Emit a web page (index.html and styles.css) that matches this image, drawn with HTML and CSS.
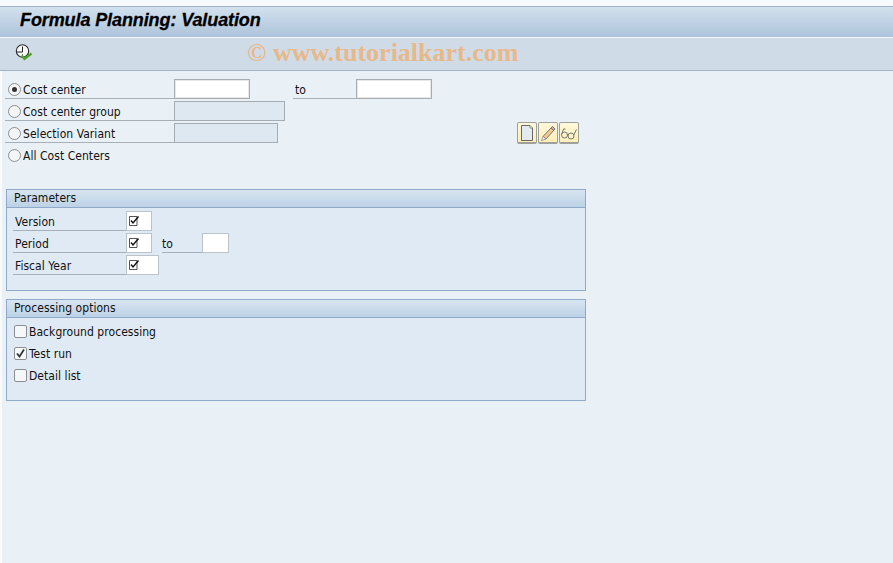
FILE: index.html
```html
<!DOCTYPE html>
<html lang="en">
<head>
<meta charset="utf-8">
<title>Formula Planning: Valuation</title>
<link rel="stylesheet" href="styles.css">
</head>
<body>
<div class="strip"></div>
<header class="titlebar"><h1>Formula Planning: Valuation</h1></header>
<div class="toolbar">
  <svg class="exec" width="18" height="18" viewBox="0 0 18 18"><circle cx="7.500" cy="7" r="6.200" fill="#f6f8f8" stroke="#2b2b2b" stroke-width="1.100"/><path d="M7.500 2.500V8M2 8H7.500M7.500 10.500V12" fill="none" stroke="#222" stroke-width="1"/><path d="M6.500 11.500l3 3.300L16.500 9.500" fill="none" stroke="#4fa32c" stroke-width="2.400"/></svg>
  <div class="watermark">© www.tutorialkart.com</div>
</div>
<main class="content">
  <div class="selection">
    <div class="row">
      <label class="lbl lbl-radio"><span class="radio on"></span>Cost center</label>
      <span class="field w76"></span>
      <label class="lbl lbl-to">to</label>
      <span class="field w76"></span>
    </div>
    <div class="row">
      <label class="lbl lbl-radio"><span class="radio"></span>Cost center group</label>
      <span class="field off w111"></span>
    </div>
    <div class="row">
      <label class="lbl lbl-radio"><span class="radio"></span>Selection Variant</label>
      <span class="field off w104"></span>
      <div class="btns">
        <button class="btn" type="button"><svg width="16" height="18" viewBox="0 0 16 18"><path d="M2.500 1.500H11L13.500 4V16.500H2.500Z" fill="#e3ebf0" stroke="#666"/><path d="M11 1.500V4H13.500" fill="#fff" stroke="#888"/></svg></button>
        <button class="btn" type="button"><svg width="16" height="18" viewBox="0 0 16 18"><path d="M3 12.500L11.500 3.500 14 6 6 15Z" fill="#f3c98e" stroke="#777"/><path d="M11 4L13.500 6.500 15 5 12.500 2.500Z" fill="#e79a9a" stroke="#777"/><path d="M1.500 16.500L3 12.500 6 15Z" fill="#fff" stroke="#777" stroke-width=".7"/></svg></button>
        <button class="btn" type="button"><svg width="18" height="16" viewBox="0 0 18 16"><circle cx="4.500" cy="10" r="3" fill="none" stroke="#777"/><circle cx="11" cy="11" r="3" fill="none" stroke="#777"/><path d="M7.300 9.500L8.300 10M1.800 9L3.500 4H5.500M13.800 10L16.500 4.500" fill="none" stroke="#777"/></svg></button>
      </div>
    </div>
    <div class="row">
      <label class="lbl lbl-radio lbl-plain"><span class="radio"></span>All Cost Centers</label>
    </div>
  </div>

  <section class="panel panel-params">
    <h2 class="panel-head">Parameters</h2>
    <div class="panel-body">
      <div class="row">
        <label class="lbl lbl-param">Version</label>
        <span class="field req w26"><svg width="12" height="12" viewBox="0 0 12 12"><path d="M1.500 1.500H9V10.500H1.500Z" fill="none" stroke="#555"/><path d="M3 5.500L5 8 10.500 1.500" fill="none" stroke="#111" stroke-width="1.400"/></svg></span>
      </div>
      <div class="row">
        <label class="lbl lbl-param">Period</label>
        <span class="field req w26"><svg width="12" height="12" viewBox="0 0 12 12"><path d="M1.500 1.500H9V10.500H1.500Z" fill="none" stroke="#555"/><path d="M3 5.500L5 8 10.500 1.500" fill="none" stroke="#111" stroke-width="1.400"/></svg></span>
        <label class="lbl lbl-to2">to</label>
        <span class="field req w27"></span>
      </div>
      <div class="row">
        <label class="lbl lbl-param">Fiscal Year</label>
        <span class="field req w33"><svg width="12" height="12" viewBox="0 0 12 12"><path d="M1.500 1.500H9V10.500H1.500Z" fill="none" stroke="#555"/><path d="M3 5.500L5 8 10.500 1.500" fill="none" stroke="#111" stroke-width="1.400"/></svg></span>
      </div>
    </div>
  </section>

  <section class="panel panel-opts">
    <h2 class="panel-head">Processing options</h2>
    <div class="panel-body">
      <div class="row"><label class="chk"><span class="box"></span><span class="chk-text">Background processing</span></label></div>
      <div class="row"><label class="chk"><span class="box"><svg width="11" height="11" viewBox="0 0 11 11"><path d="M2 5.500L4.500 8.500 9 1.500" fill="none" stroke="#333" stroke-width="1.800"/></svg></span><span class="chk-text">Test run</span></label></div>
      <div class="row"><label class="chk"><span class="box"></span><span class="chk-text">Detail list</span></label></div>
    </div>
  </section>
</main>
</body>
</html>
```

FILE: styles.css
```css
* { box-sizing: border-box; }
html, body { margin: 0; padding: 0; height: 100%; }
body {
  display: flex;
  flex-direction: column;
  overflow: hidden;
  background: #f8fafc;
  font: 12px/14px "DejaVu Sans Condensed", "DejaVu Sans", sans-serif;
  font-stretch: condensed;
  letter-spacing: 0.05px;
  color: #111;
}
.strip { height: 6px; flex: none; background: #f8f9fc; }
.titlebar {
  height: 32px;
  flex: none;
  padding: 2px 0 0 20px;
  border-top: 1px solid #a3b2c6;
  border-bottom: 1px solid #f1f5f8;
  background: linear-gradient(#d3e1ee, #adc3da);
}
.titlebar h1 {
  margin: 0;
  font: italic bold 18px/22px "Liberation Sans", sans-serif;
  letter-spacing: -0.1px;
  -webkit-text-stroke: 0.3px #000;
  color: #000;
}
.toolbar {
  position: relative;
  height: 33px;
  flex: none;
  padding: 6px 0 0 15px;
  border-bottom: 1px solid #a3b4c8;
  background: #cfdce7;
}
.exec { display: block; }
.watermark {
  position: absolute;
  left: 247px;
  top: 0;
  font: bold 26px/30px "Liberation Serif", serif;
  letter-spacing: 0;
  color: #e7b88a;
  white-space: nowrap;
}
.content {
  flex: 1;
  margin-left: 2px;
  padding: 8px 0 0 3px;
  background: #e9f0f6;
}
.row { display: flex; align-items: flex-start; height: 22px; }
.lbl {
  display: flex;
  align-items: center;
  height: 20px;
  padding-top: 3px;
  white-space: nowrap;
  border-bottom: 1px solid #a6b0b9;
}
.lbl-radio { width: 169px; padding-left: 3px; }
.lbl-plain { padding-top: 1px; border-bottom: 0; }
.lbl-to { width: 63px; margin-left: 43px; padding-left: 2px; }
.radio {
  width: 13px;
  height: 13px;
  margin-right: 2px;
  margin-top: -1px;
  flex: none;
  border: 1px solid #8b8f93;
  border-radius: 50%;
  background: #f3f5f7;
  display: flex;
  align-items: center;
  justify-content: center;
}
.radio.on::after {
  content: "";
  width: 5px;
  height: 5px;
  border-radius: 50%;
  background: #333;
}
.field {
  display: flex;
  align-items: center;
  height: 20px;
  flex: none;
  padding-left: 1px;
  border: 1px solid #a9adb1;
  box-shadow: inset 0 0 0 1px #e6e8ea;
  background: #fff;
}
.field.off { background: #dde8f1; border-color: #a5adb4; box-shadow: none; }
.field.req { border-color: #bcc3c9; box-shadow: none; }
.w76 { width: 76px; }
.w111 { width: 111px; }
.w104 { width: 104px; }
.w26 { width: 26px; }
.w27 { width: 27px; }
.w33 { width: 33px; }
.btns { display: flex; gap: 1px; margin-left: 239px; margin-top: -1px; }
.btn {
  width: 20px;
  height: 22px;
  padding: 0;
  display: flex;
  align-items: center;
  justify-content: center;
  border: 1px solid #a0a09a;
  border-bottom-width: 2px;
  border-radius: 2px;
  background: linear-gradient(#fff9dc, #fdeeb5);
}
.panel {
  width: 580px;
  margin-left: 1px;
  border: 1px solid #8fa9c8;
  background: #dfeaf4;
}
.panel-params { height: 102px; margin-top: 22px; }
.panel-opts { height: 102px; margin-top: 8px; }
.panel-head {
  height: 18px;
  margin: 0;
  padding: 1px 0 0 7px;
  font: inherit;
  font-stretch: condensed;
  color: #111;
  border-bottom: 1px solid #8fa9c8;
  background: linear-gradient(#d8e5f1, #bcd2e6);
}
.panel-body { padding-top: 3px; }
.lbl-param { width: 113px; margin-left: 6px; padding-left: 2px; }
.lbl-to2 { width: 40px; margin-left: 10px; padding-left: 0; }
.chk { display: flex; align-items: center; height: 20px; margin-left: 7px; white-space: nowrap; }
.chk-text { padding-top: 1px; }
.box {
  width: 13px;
  height: 13px;
  margin-right: 2px;
  flex: none;
  display: flex;
  align-items: center;
  justify-content: center;
  border: 1px solid #8b8f93;
  border-radius: 2px;
  background: #f5f7f9;
}
```
